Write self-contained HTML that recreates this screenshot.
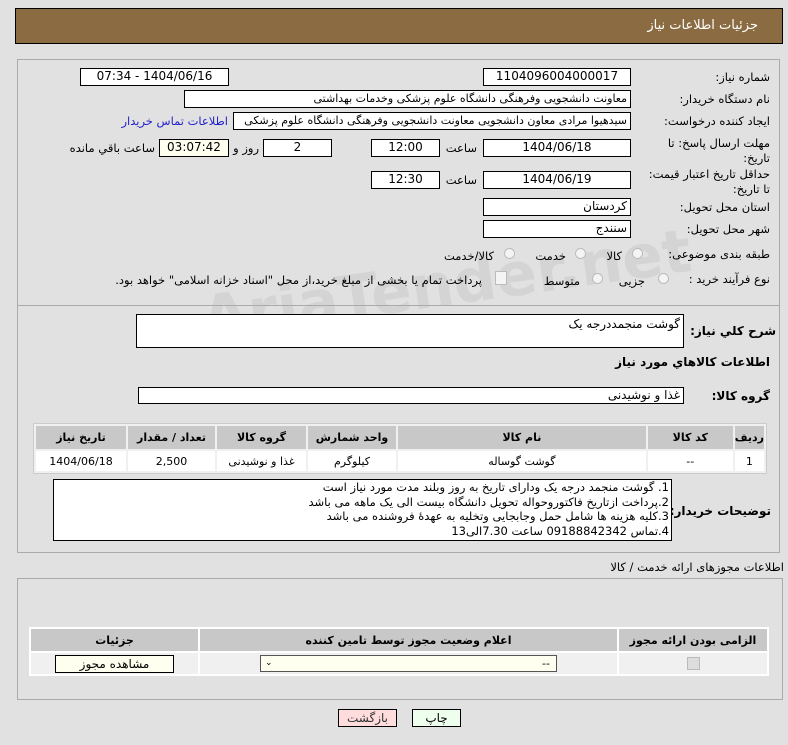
<!DOCTYPE html>
<html><head><meta charset="utf-8"><style>
body{margin:0;width:788px;height:745px;background:#e1e1e1;font-family:"DejaVu Sans","Liberation Sans",sans-serif;font-size:11px;color:#000;position:relative;overflow:hidden;direction:rtl}
.a{position:absolute;white-space:nowrap}
.box{position:absolute;background:#fff;border:1px solid #000;box-sizing:border-box;text-align:center;font-size:12px;line-height:15px;overflow:hidden;white-space:nowrap}
.l{position:absolute;white-space:nowrap;text-align:right;line-height:14px;font-size:11.5px}
.r{position:absolute;width:11px;height:11px;border-radius:50%;border:1px solid #bbb;background:#f4f4f4;box-sizing:border-box}
table{border-collapse:separate;border-spacing:2px;position:absolute;background:#fff;font-size:11px}
td{text-align:center;padding:0}
th{background:#c8c8c8;font-weight:bold;font-size:11px;padding:0}
</style></head><body>
<div class="a" style="left:15px;top:8px;width:768px;height:36px;background:#8b6c42;border:1px solid #000;box-sizing:border-box"></div>
<div class="a" style="right:30px;top:18px;color:#fff;font-size:13px">جزئیات اطلاعات نیاز</div>
<div class="a" style="left:17px;top:59px;width:763px;height:494px;border:1px solid #aaa;box-sizing:border-box"></div>
<div class="a" style="left:200px;top:250px;font-size:60px;font-weight:bold;color:rgba(190,190,190,0.35);direction:ltr;transform:rotate(-8deg)">AriaTender.net</div>

<div class="l" style="right:18px;top:70px">شماره نیاز:</div>
<div class="box" style="left:483px;top:68px;width:148px;height:18px">1104096004000017</div>
<div class="l" style="right:560px;top:70px">تاریخ و ساعت اعلان عمومی:</div>
<div class="box" style="left:80px;top:68px;width:149px;height:18px">1404/06/16 - 07:34</div>

<div class="l" style="right:18px;top:92px">نام دستگاه خریدار:</div>
<div class="box" style="left:184px;top:90px;width:447px;height:18px;text-align:right;padding-right:3px;font-size:11px">معاونت دانشجویی وفرهنگی دانشگاه علوم پزشکی وخدمات بهداشتی</div>

<div class="l" style="right:18px;top:114px">ایجاد کننده درخواست:</div>
<div class="box" style="left:233px;top:112px;width:398px;height:18px;text-align:right;padding-right:3px;font-size:11px">سیدهیوا مرادی معاون دانشجویی معاونت دانشجویی وفرهنگی دانشگاه علوم پزشکی</div>
<div class="l" style="right:560px;top:114px;color:#2222cc">اطلاعات تماس خریدار</div>

<div class="l" style="right:18px;top:136px;line-height:15px">مهلت ارسال پاسخ: تا<br>تاریخ:</div>
<div class="box" style="left:483px;top:139px;width:148px;height:18px">1404/06/18</div>
<div class="l" style="right:311px;top:141px">ساعت</div>
<div class="box" style="left:371px;top:139px;width:69px;height:18px">12:00</div>
<div class="box" style="left:263px;top:139px;width:69px;height:18px">2</div>
<div class="l" style="right:529px;top:141px">روز و</div>
<div class="box" style="left:159px;top:139px;width:70px;height:18px;background:#fffff0">03:07:42</div>
<div class="l" style="right:633px;top:141px">ساعت باقي مانده</div>

<div class="l" style="right:18px;top:167px;line-height:15px">حداقل تاریخ اعتبار قیمت:<br>تا تاریخ:</div>
<div class="box" style="left:483px;top:171px;width:148px;height:18px">1404/06/19</div>
<div class="l" style="right:311px;top:173px">ساعت</div>
<div class="box" style="left:371px;top:171px;width:69px;height:18px">12:30</div>

<div class="l" style="right:18px;top:200px">استان محل تحویل:</div>
<div class="box" style="left:483px;top:198px;width:148px;height:18px;text-align:right;padding-right:3px">کردستان</div>
<div class="l" style="right:18px;top:222px">شهر محل تحویل:</div>
<div class="box" style="left:483px;top:220px;width:148px;height:18px;text-align:right;padding-right:3px">سنندج</div>

<div class="l" style="right:18px;top:247px">طبقه بندی موضوعی:</div>
<div class="r" style="left:632px;top:248px"></div><div class="l" style="right:166px;top:249px">کالا</div>
<div class="r" style="left:575px;top:248px"></div><div class="l" style="right:222px;top:249px">خدمت</div>
<div class="r" style="left:504px;top:248px"></div><div class="l" style="right:294px;top:249px">کالا/خدمت</div>

<div class="l" style="right:18px;top:272px">نوع فرآیند خرید :</div>
<div class="r" style="left:658px;top:273px"></div><div class="l" style="right:143px;top:274px">جزیی</div>
<div class="r" style="left:592px;top:273px"></div><div class="l" style="right:208px;top:274px">متوسط</div>
<div class="a" style="left:495px;top:271px;width:10px;height:12px;border:1px solid #bbb;background:#f4f4f4"></div>
<div class="l" style="right:306px;top:273px">پرداخت تمام یا بخشی از مبلغ خرید،از محل "اسناد خزانه اسلامی" خواهد بود.</div>

<div class="a" style="left:17px;top:305px;width:763px;height:1px;background:#aaa"></div>
<div class="l" style="right:12px;top:324px;font-weight:bold;font-size:12px">شرح کلي نیاز:</div>
<div class="box" style="left:136px;top:314px;width:548px;height:34px;text-align:right;padding-right:3px;line-height:18px">گوشت منجمددرجه یک</div>
<div class="l" style="right:18px;top:355px;font-weight:bold;font-size:12px">اطلاعات کالاهاي مورد نیاز</div>
<div class="l" style="right:18px;top:389px;font-weight:bold;font-size:12px">گروه کالا:</div>
<div class="box" style="left:138px;top:387px;width:546px;height:17px;text-align:right;padding-right:3px;line-height:15px">غذا و نوشیدنی</div>

<table style="left:33px;top:423px;width:734px;background:#f0f0f0;border:1px solid #ccc">
<tr style="height:23px"><th style="width:23px">ردیف</th><th style="width:85px">کد کالا</th><th>نام کالا</th><th style="width:88px">واحد شمارش</th><th style="width:89px">گروه کالا</th><th style="width:87px">تعداد / مقدار</th><th style="width:90px">تاریخ نیاز</th></tr>
<tr style="height:20px"><td style="background:#fff">1</td><td style="background:#fff">--</td><td style="background:#fff">گوشت گوساله</td><td style="background:#fff">کیلوگرم</td><td style="background:#fff">غذا و نوشیدنی</td><td style="background:#fff">2,500</td><td style="background:#fff">1404/06/18</td></tr>
</table>

<div class="l" style="right:17px;top:504px;font-weight:bold;font-size:12px">توضیحات خریدار:</div>
<div class="box" style="left:53px;top:479px;width:619px;height:62px;text-align:right;padding-right:2px;line-height:14.5px;font-size:11.5px">1. گوشت منجمد درجه یک ودارای تاریخ به روز وبلند مدت مورد نیاز است<br>2.پرداخت ازتاریخ فاکتوروحواله تحویل دانشگاه بیست الی یک ماهه می باشد<br>3.کلیه هزینه ها شامل حمل وجابجایی وتخلیه به عهدهٔ فروشنده می باشد<br>4.تماس 09188842342 ساعت 7.30الی13</div>

<div class="l" style="right:4px;top:560px">اطلاعات مجوزهای ارائه خدمت / کالا</div>
<div class="a" style="left:17px;top:578px;width:766px;height:122px;border:1px solid #aaa;box-sizing:border-box"></div>
<table style="left:29px;top:627px;width:740px;background:#fff;border-spacing:2px">
<tr style="height:22px"><th style="width:148px">الزامی بودن ارائه مجوز</th><th>اعلام وضعیت مجوز توسط تامین کننده</th><th style="width:167px">جزئیات</th></tr>
<tr style="height:21px"><td style="background:#f0f0f0"><span style="display:inline-block;width:11px;height:11px;background:#ddd;border:1px solid #bbb;vertical-align:middle"></span></td>
<td style="background:#f0f0f0"><div style="margin:0 auto;width:297px;height:17px;border:1px solid #555;background:#fffff0;text-align:right;padding-right:6px;box-sizing:border-box;position:relative;line-height:15px">--<span style="position:absolute;left:4px;top:0;font-size:9px">&#8964;</span></div></td>
<td style="background:#f0f0f0"><div style="margin:0 auto;width:119px;height:18px;border:1px solid #000;background:#fffff0;line-height:16px;font-size:12px;box-sizing:border-box">مشاهده مجوز</div></td></tr>
</table>

<div class="box" style="left:338px;top:709px;width:59px;height:18px;background:#fdd;line-height:16px;font-size:12px;color:#333">بازگشت</div>
<div class="box" style="left:412px;top:709px;width:49px;height:18px;background:#efe;line-height:16px;font-size:12px">چاپ</div>
</body></html>
